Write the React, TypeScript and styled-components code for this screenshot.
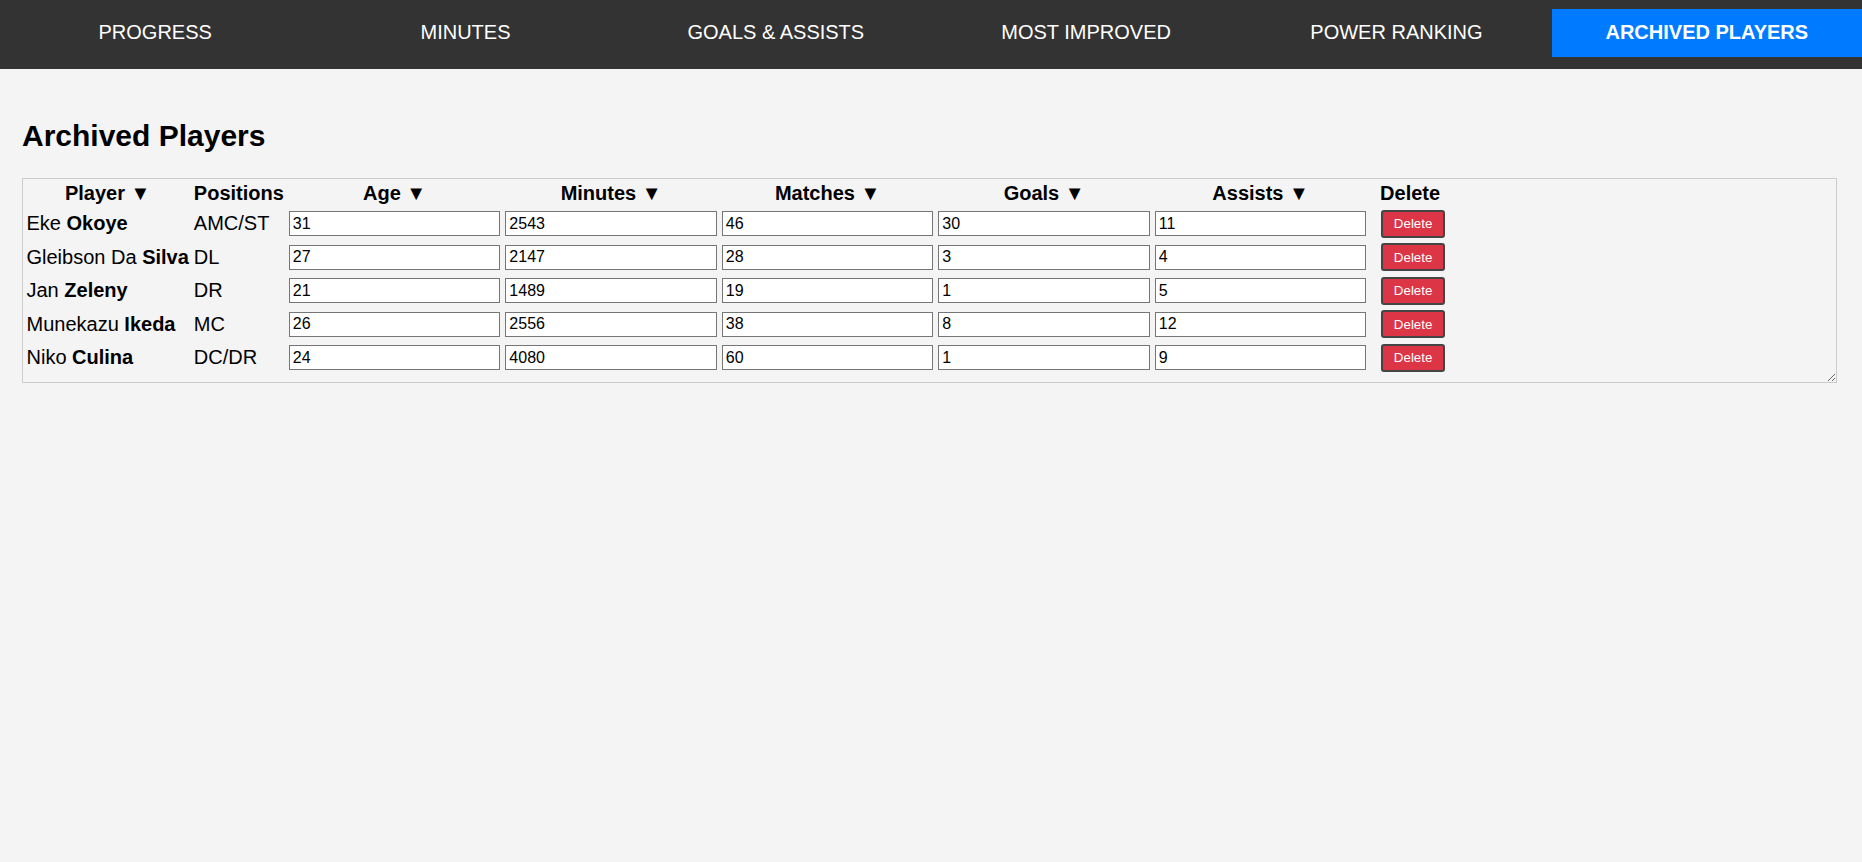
import * as React from 'react';
import { FC } from 'react';
import styled, { createGlobalStyle } from 'styled-components';

const GlobalStyle = createGlobalStyle`
  body {
    margin: 0;
    background: #f4f4f4;
    font-family: 'Liberation Sans', Arial, sans-serif;
    font-size: 20px;
    color: #000;
  }
`;

const NavBar = styled.nav`
  display: flex;
  background: #333;
  padding: 9px 0 12px;
`;

const NavTab = styled.div<{ $active?: boolean }>`
  flex: 1;
  height: 48px;
  display: flex;
  align-items: center;
  justify-content: center;
  padding-bottom: 2px;
  box-sizing: border-box;
  color: white;
  font-size: 20px;
  font-weight: ${(p) => (p.$active ? 700 : 400)};
  background: ${(p) => (p.$active ? '#007bff' : 'transparent')};
  cursor: pointer;
`;

const Main = styled.main`
  padding: 25px 25px 0 22px;
`;

const Title = styled.h2`
  font-size: 30px;
  font-weight: 700;
  margin: 25px 0;
`;

const TableBox = styled.div`
  border: 1px solid #ccc;
  padding-bottom: 6px;
  resize: both;
  overflow: auto;
`;

const Table = styled.table`
  border-spacing: 2px;
  font-size: 20px;
`;

const HeadCell = styled.th`
  padding: 1px 1.5px;
  font-weight: 700;
  text-align: center;
  white-space: nowrap;
`;

const Row = styled.tr`
  height: 31.5px;
`;

const Cell = styled.td`
  padding: 1px 1.5px;
  vertical-align: middle;
  white-space: nowrap;
`;

const StatInput = styled.input`
  box-sizing: border-box;
  width: 211.5px;
  height: 25px;
  padding: 2px 3px;
  border: 1px solid #767676;
  border-radius: 0;
  background: #fff;
  font-family: 'Liberation Sans', Arial, sans-serif;
  font-size: 16px;
  color: #000;
  display: block;
`;

const DeleteButton = styled.button`
  display: block;
  margin: 0 4px 0 10px;
  height: 28px;
  padding: 0 10.5px;
  border: 2px solid #444;
  border-radius: 3px;
  background: #dc3545;
  color: white;
  font-family: 'Liberation Sans', Arial, sans-serif;
  font-size: 13.33px;
  cursor: pointer;
`;

type Player = {
  first: string;
  last: string;
  positions: string;
  age: number;
  minutes: number;
  matches: number;
  goals: number;
  assists: number;
};

const players: Player[] = [
  { first: 'Eke', last: 'Okoye', positions: 'AMC/ST', age: 31, minutes: 2543, matches: 46, goals: 30, assists: 11 },
  { first: 'Gleibson Da', last: 'Silva', positions: 'DL', age: 27, minutes: 2147, matches: 28, goals: 3, assists: 4 },
  { first: 'Jan', last: 'Zeleny', positions: 'DR', age: 21, minutes: 1489, matches: 19, goals: 1, assists: 5 },
  { first: 'Munekazu', last: 'Ikeda', positions: 'MC', age: 26, minutes: 2556, matches: 38, goals: 8, assists: 12 },
  { first: 'Niko', last: 'Culina', positions: 'DC/DR', age: 24, minutes: 4080, matches: 60, goals: 1, assists: 9 },
];

const tabs = ['PROGRESS', 'MINUTES', 'GOALS & ASSISTS', 'MOST IMPROVED', 'POWER RANKING', 'ARCHIVED PLAYERS'];

const statKeys: (keyof Player)[] = ['age', 'minutes', 'matches', 'goals', 'assists'];

const App: FC = () => {
  return (
    <>
      <GlobalStyle />
      <NavBar>
        {tabs.map((t) => (
          <NavTab key={t} $active={t === 'ARCHIVED PLAYERS'}>
            {t}
          </NavTab>
        ))}
      </NavBar>
      <Main>
        <Title>Archived Players</Title>
        <TableBox>
          <Table>
            <thead>
              <tr>
                <HeadCell>Player ▼</HeadCell>
                <HeadCell>Positions</HeadCell>
                <HeadCell>Age ▼</HeadCell>
                <HeadCell>Minutes ▼</HeadCell>
                <HeadCell>Matches ▼</HeadCell>
                <HeadCell>Goals ▼</HeadCell>
                <HeadCell>Assists ▼</HeadCell>
                <HeadCell>Delete</HeadCell>
              </tr>
            </thead>
            <tbody>
              {players.map((p) => (
                <Row key={p.last}>
                  <Cell>
                    {p.first} <b>{p.last}</b>
                  </Cell>
                  <Cell>{p.positions}</Cell>
                  {statKeys.map((k) => (
                    <Cell key={k}>
                      <StatInput type="text" defaultValue={String(p[k])} />
                    </Cell>
                  ))}
                  <Cell>
                    <DeleteButton>Delete</DeleteButton>
                  </Cell>
                </Row>
              ))}
            </tbody>
          </Table>
        </TableBox>
      </Main>
    </>
  );
};

export default App;
